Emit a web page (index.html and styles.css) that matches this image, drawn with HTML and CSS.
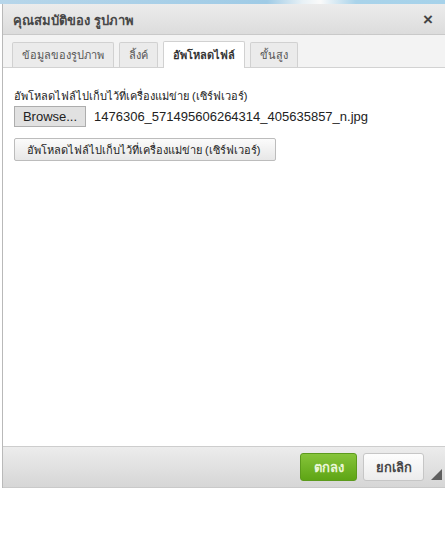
FILE: index.html
```html
<!DOCTYPE html>
<html lang="th">
<head>
<meta charset="utf-8">
<link rel="stylesheet" href="styles.css">
</head>
<body>
<div class="page">
  <div class="dialog">
    <div class="titlebar">
      <span class="title">คุณสมบัติของ รูปภาพ</span>
      <span class="close">×</span>
    </div>
    <div class="tabs">
      <span class="tab">ข้อมูลของรูปภาพ</span>
      <span class="tab">ลิ้งค์</span>
      <span class="tab active">อัพโหลดไฟล์</span>
      <span class="tab">ขั้นสูง</span>
    </div>
    <div class="content">
      <div class="label">อัพโหลดไฟล์ไปเก็บไว้ที่เครื่องแม่ข่าย (เซิร์ฟเวอร์)</div>
      <div class="filerow">
        <span class="browse">Browse...</span>
        <span class="filename">1476306_571495606264314_405635857_n.jpg</span>
      </div>
      <div class="uploadrow">
        <span class="upload">อัพโหลดไฟล์ไปเก็บไว้ที่เครื่องแม่ข่าย (เซิร์ฟเวอร์)</span>
      </div>
    </div>
    <div class="footer">
      <span class="btn ok">ตกลง</span>
      <span class="btn cancel">ยกเลิก</span>
      <span class="grip"></span>
    </div>
  </div>
</div>
</body>
</html>
```
FILE: styles.css
```css
html, body {
  margin: 0;
  padding: 0;
  background: #fff;
  font-family: Tahoma, "Liberation Sans", "DejaVu Sans", sans-serif;
}
.page {
  width: 445px;
  height: 540px;
  background: #fff;
  position: relative;
  overflow: hidden;
}
.page::before {
  content: "";
  display: block;
  height: 4px;
  background: linear-gradient(90deg, #b7d6ea, #9fcbe6 60%, #e8f1f6 68%, #fafafa 72%, #a9d3ea 80%, #a6d2ea);
}
.dialog {
  margin-left: 2px;
  width: 450px;
  border-left: 1px solid #b9b9b9;
  display: flex;
  flex-direction: column;
  background: #fff;
}
.titlebar {
  height: 30px;
  background: linear-gradient(#ececec, #dcdcdc);
  border-bottom: 1px solid #c9c9c9;
  display: flex;
  align-items: center;
  justify-content: space-between;
  padding: 0 0 0 10px;
}
.title {
  font-size: 13px;
  font-weight: bold;
  color: #474747;
  padding-top: 2px;
}
.close {
  width: 10px;
  margin-right: 20px;
  font-size: 17px;
  font-weight: bold;
  color: #444;
  line-height: 1;
}
.tabs {
  height: 33px;
  background: #f3f3f3;
  border-bottom: 1px solid #d2d2d2;
  display: flex;
  align-items: flex-end;
  gap: 5px;
  padding-left: 9px;
  box-sizing: border-box;
}
.tab {
  height: 25px;
  box-sizing: border-box;
  border: 1px solid #d1d1d1;
  border-bottom: none;
  background: #ebebeb;
  border-radius: 2px 2px 0 0;
  font-size: 11px;
  color: #555;
  display: flex;
  align-items: center;
  padding: 0 9px;
}
.tab.active {
  background: #fff;
  height: 27px;
  margin-bottom: -1px;
  color: #222;
  -webkit-text-stroke: 0.3px #222;
}
.content {
  height: 379px;
  padding: 21px 0 0 11px;
  box-sizing: border-box;
  border-bottom: 1px solid #cdcdcd;
}
.label {
  font-size: 11px;
  color: #222;
  line-height: 14px;
}
.filerow {
  display: flex;
  align-items: center;
  margin-top: 3px;
}
.browse {
  width: 72px;
  height: 21px;
  box-sizing: border-box;
  background: #e1e1e1;
  border: 1px solid #adadad;
  font-family: "Liberation Sans", Arial, sans-serif;
  font-size: 13px;
  color: #222;
  display: flex;
  align-items: center;
  justify-content: center;
}
.filename {
  margin-left: 8px;
  font-family: "Liberation Sans", Arial, sans-serif;
  font-size: 13px;
  color: #222;
}
.uploadrow {
  margin-top: 11px;
}
.upload {
  display: inline-flex;
  align-items: center;
  height: 23px;
  box-sizing: border-box;
  padding: 0 12px;
  width: 262px;
  border: 1px solid #bcbcbc;
  border-radius: 2px;
  background: linear-gradient(#fbfbfb, #e7e7e7);
  font-size: 11px;
  color: #222;
}
.footer {
  height: 40px;
  background: linear-gradient(#ececec, #d6d6d6);
  border-bottom: 1px solid #c9c9c9;
  display: flex;
  align-items: center;
  padding-left: 297px;
  gap: 6px;
  position: relative;
}
.btn {
  height: 28px;
  box-sizing: border-box;
  border-radius: 3px;
  display: flex;
  align-items: center;
  justify-content: center;
  font-size: 13px;
  font-weight: bold;
}
.ok {
  width: 57px;
  background: linear-gradient(#86c43a, #5ea515);
  border: 1px solid #5c9a1d;
  color: #eaf6d8;
}
.cancel {
  width: 61px;
  background: linear-gradient(#fdfdfd, #ececec);
  border: 1px solid #c6c6c6;
  color: #474747;
}
.grip {
  position: absolute;
  left: 428px;
  top: 22px;
  width: 0;
  height: 0;
  border-left: 11px solid transparent;
  border-bottom: 11px solid #5f5f5f;
}
```
